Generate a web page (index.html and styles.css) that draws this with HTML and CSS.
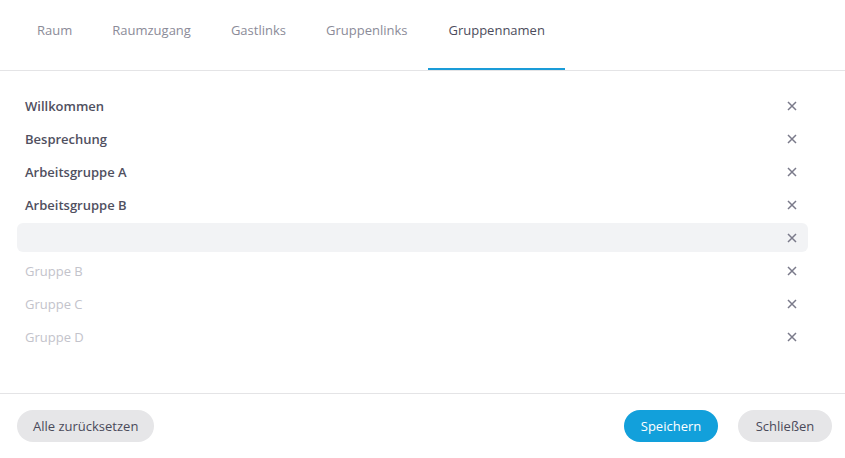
FILE: index.html
```html
<!DOCTYPE html>
<html lang="de">
<head>
<meta charset="utf-8">
<title>Gruppennamen</title>
<link rel="stylesheet" href="styles.css">
</head>
<body>
<div class="dialog">
  <nav class="tabs">
    <div class="tab">Raum</div>
    <div class="tab">Raumzugang</div>
    <div class="tab">Gastlinks</div>
    <div class="tab">Gruppenlinks</div>
    <div class="tab active">Gruppennamen</div>
  </nav>
  <div class="list">
    <div class="row"><span class="name">Willkommen</span><span class="remove"><svg viewBox="0 0 10 10" width="10" height="10"><path d="M1 1L9 9M9 1L1 9"/></svg></span></div>
    <div class="row"><span class="name">Besprechung</span><span class="remove"><svg viewBox="0 0 10 10" width="10" height="10"><path d="M1 1L9 9M9 1L1 9"/></svg></span></div>
    <div class="row"><span class="name">Arbeitsgruppe A</span><span class="remove"><svg viewBox="0 0 10 10" width="10" height="10"><path d="M1 1L9 9M9 1L1 9"/></svg></span></div>
    <div class="row"><span class="name">Arbeitsgruppe B</span><span class="remove"><svg viewBox="0 0 10 10" width="10" height="10"><path d="M1 1L9 9M9 1L1 9"/></svg></span></div>
    <div class="row focused"><span class="name"></span><span class="remove"><svg viewBox="0 0 10 10" width="10" height="10"><path d="M1 1L9 9M9 1L1 9"/></svg></span></div>
    <div class="row"><span class="name placeholder">Gruppe B</span><span class="remove"><svg viewBox="0 0 10 10" width="10" height="10"><path d="M1 1L9 9M9 1L1 9"/></svg></span></div>
    <div class="row"><span class="name placeholder">Gruppe C</span><span class="remove"><svg viewBox="0 0 10 10" width="10" height="10"><path d="M1 1L9 9M9 1L1 9"/></svg></span></div>
    <div class="row"><span class="name placeholder">Gruppe D</span><span class="remove"><svg viewBox="0 0 10 10" width="10" height="10"><path d="M1 1L9 9M9 1L1 9"/></svg></span></div>
  </div>
  <footer class="footer">
    <button class="btn">Alle zurücksetzen</button>
    <div class="spacer"></div>
    <button class="btn primary">Speichern</button>
    <button class="btn">Schließen</button>
  </footer>
</div>
</body>
</html>
```
FILE: styles.css
```css
html, body {
  margin: 0;
  padding: 0;
  background: #ffffff;
}
body {
  font-family: "Open Sans", "Noto Sans", sans-serif;
  font-size: 13px;
  color: #4a4a5a;
}
.dialog {
  height: 458px;
  display: flex;
  flex-direction: column;
}
.tabs {
  display: flex;
  height: 70px;
  padding-left: 17px;
  border-bottom: 1px solid #e4e4e6;
}
.tab {
  padding: 0 20px;
  height: 60px;
  line-height: 60px;
  color: #8b8b98;
  font-size: 13px;
}
.tab.active {
  color: #4c4c5c;
  height: 68px;
  border-bottom: 2px solid #1a9cd8;
  margin-left: 1px;
}
.list {
  flex: 1;
  display: flex;
  flex-direction: column;
  gap: 4px;
  padding: 20px 37px 0 17px;
}
.row {
  height: 29px;
  display: flex;
  align-items: center;
  padding: 0 11px 0 8px;
  border-radius: 6px;
}
.row.focused {
  background: #f2f3f5;
}
.name {
  flex: 1;
  font-weight: 600;
  color: #50505f;
}
.name.placeholder {
  font-weight: 400;
  color: #c3c3cb;
}
.remove {
  width: 10px;
  height: 10px;
  display: flex;
}
.remove svg path {
  stroke: #7a7a8a;
  stroke-width: 1.5;
  fill: none;
}
.footer {
  display: flex;
  align-items: center;
  gap: 20px;
  padding: 16px 13px 16px 17px;
  border-top: 1px solid #e4e4e6;
}
.spacer {
  flex: 1;
}
.btn {
  height: 32px;
  min-width: 94px;
  padding: 0 16px;
  border: none;
  border-radius: 16px;
  background: #e6e6e8;
  color: #4a4a5a;
  font-family: "Open Sans", "Noto Sans", sans-serif;
  font-size: 13px;
}
.btn.primary {
  background: #12a0db;
  color: #ffffff;
}
```
